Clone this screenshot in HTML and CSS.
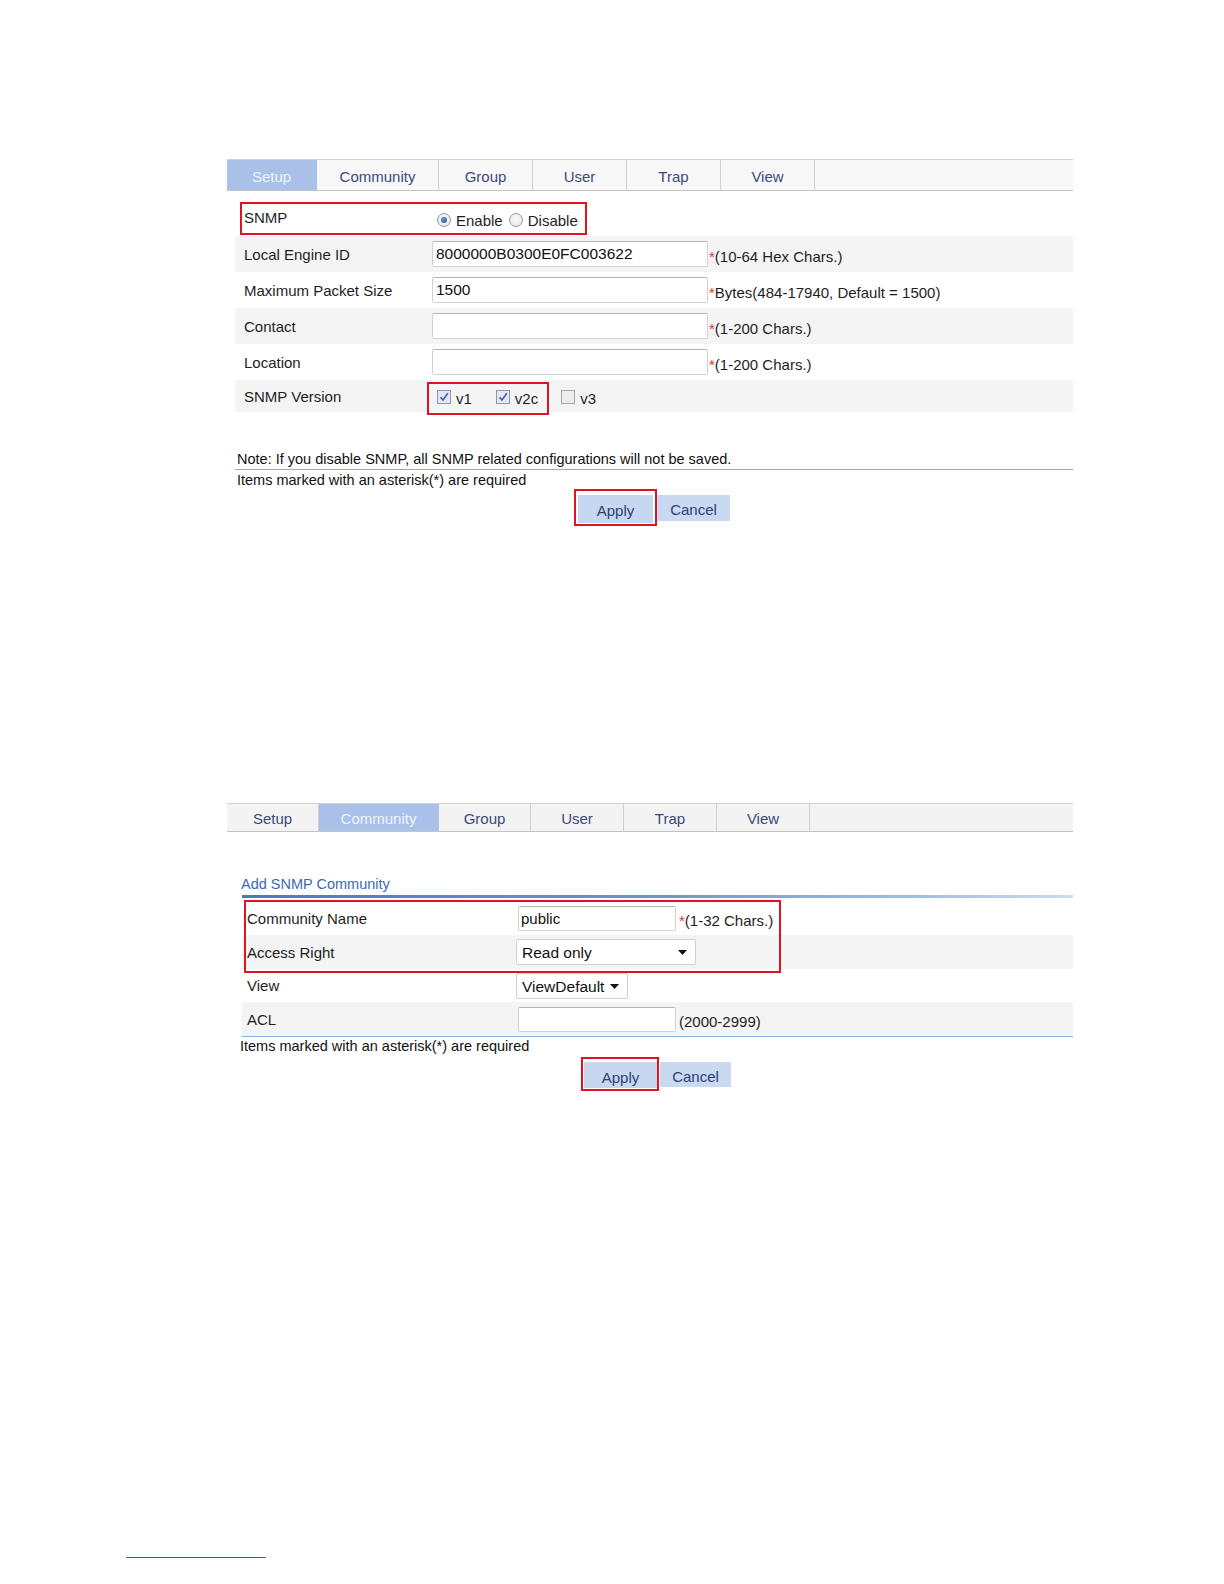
FILE: index.html
```html
<!DOCTYPE html>
<html>
<head>
<meta charset="utf-8">
<title>SNMP</title>
<link rel="stylesheet" href="styles.css">
</head>
<body>
<div class="page">

  <section class="panel panel-setup">
    <div class="tabs tabs-a">
      <div class="tab active" style="width:90px">Setup</div>
      <div class="tab" style="width:122px">Community</div>
      <div class="tab" style="width:94px">Group</div>
      <div class="tab" style="width:94px">User</div>
      <div class="tab" style="width:94px">Trap</div>
      <div class="tab" style="width:94px">View</div>
    </div>

    <div class="form form-a">
      <div class="row row-snmp">
        <div class="lbl lbl-top">SNMP</div>
        <div class="val">
          <span class="radio on"></span><span class="opt">Enable</span>
          <span class="radio"></span><span class="opt">Disable</span>
        </div>
        <div class="mark mark-snmp"></div>
      </div>
      <div class="row alt">
        <div class="lbl">Local Engine ID</div>
        <div class="val"><div class="input wide">8000000B0300E0FC003622</div><span class="hint"><i>*</i>(10-64 Hex Chars.)</span></div>
      </div>
      <div class="row">
        <div class="lbl">Maximum Packet Size</div>
        <div class="val"><div class="input wide">1500</div><span class="hint"><i>*</i>Bytes(484-17940, Default = 1500)</span></div>
      </div>
      <div class="row alt">
        <div class="lbl">Contact</div>
        <div class="val"><div class="input wide"></div><span class="hint"><i>*</i>(1-200 Chars.)</span></div>
      </div>
      <div class="row">
        <div class="lbl">Location</div>
        <div class="val"><div class="input wide"></div><span class="hint"><i>*</i>(1-200 Chars.)</span></div>
      </div>
      <div class="row alt row-ver">
        <div class="lbl">SNMP Version</div>
        <div class="val">
          <span class="cb"><svg width="14" height="14" viewBox="0 0 14 14"><rect x="0.5" y="0.5" width="13" height="13" fill="#e4e7ef" stroke="#8b98b4"/><path d="M3.5 7.2 L6 10 L10.8 3.2" fill="none" stroke="#3d5fae" stroke-width="1.6"/></svg></span><span class="cbl">v1</span>
          <span class="cb cb2"><svg width="14" height="14" viewBox="0 0 14 14"><rect x="0.5" y="0.5" width="13" height="13" fill="#e4e7ef" stroke="#8b98b4"/><path d="M3.5 7.2 L6 10 L10.8 3.2" fill="none" stroke="#3d5fae" stroke-width="1.6"/></svg></span><span class="cbl">v2c</span>
          <span class="cb cb3"><svg width="14" height="14" viewBox="0 0 14 14"><rect x="0.5" y="0.5" width="13" height="13" fill="#eeeeee" stroke="#a8a8a8"/></svg></span><span class="cbl">v3</span>
        </div>
        <div class="mark mark-ver"></div>
      </div>
    </div>

    <div class="note">Note: If you disable SNMP, all SNMP related configurations will not be saved.</div>
    <div class="req req-a">Items marked with an asterisk(*) are required</div>
    <div class="btns btns-a">
      <div class="btn apply marked">Apply</div>
      <div class="btn cancel">Cancel</div>
    </div>
  </section>

  <section class="panel panel-community">
    <div class="tabs tabs-b">
      <div class="tab" style="width:92px">Setup</div>
      <div class="tab active" style="width:120px">Community</div>
      <div class="tab" style="width:92px">Group</div>
      <div class="tab" style="width:93px">User</div>
      <div class="tab" style="width:93px">Trap</div>
      <div class="tab" style="width:93px">View</div>
    </div>

    <div class="title">Add SNMP Community</div>
    <div class="title-rule"></div>

    <div class="form form-b">
      <div class="group-marked">
        <div class="row2 h33">
          <div class="lbl2">Community Name</div>
          <div class="val"><div class="input small">public</div><span class="hint2"><i>*</i>(1-32 Chars.)</span></div>
        </div>
        <div class="row2 h34 alt">
          <div class="lbl2">Access Right</div>
          <div class="val"><div class="select sel-access"><span>Read only</span><svg width="9" height="5" viewBox="0 0 9 5"><path d="M0 0 H9 L4.5 5 Z" fill="#111"/></svg></div></div>
        </div>
      </div>
      <div class="row2 h33">
        <div class="lbl2">View</div>
        <div class="val"><div class="select sel-view"><span>ViewDefault</span><svg width="9" height="5" viewBox="0 0 9 5"><path d="M0 0 H9 L4.5 5 Z" fill="#111"/></svg></div></div>
      </div>
      <div class="row2 h34 alt">
        <div class="lbl2">ACL</div>
        <div class="val"><div class="input small"></div><span class="hint2">(2000-2999)</span></div>
      </div>
    </div>

    <div class="req req-b">Items marked with an asterisk(*) are required</div>
    <div class="btns btns-b">
      <div class="btn apply marked">Apply</div>
      <div class="btn cancel">Cancel</div>
    </div>
  </section>

  <div class="footrule"></div>
</div>
</body>
</html>
```

FILE: styles.css
```css
* { box-sizing: border-box; }

body {
  margin: 0;
  background: #ffffff;
  font-family: "Liberation Sans", Arial, sans-serif;
  font-size: 15px;
  color: #1e1e1e;
}

.page {
  padding-top: 159px;
  padding-bottom: 0;
}

.panel {
  margin-left: 227px;
  width: 846px;
}

/* ---------- tabs ---------- */
.tabs {
  display: flex;
  border-top: 1px solid #d4d4d4;
  border-bottom: 1px solid #c4c4c4;
}
.tabs-a { height: 32px; background: #f8f8f8; }
.tabs-b { height: 29px; background: #f3f3f3; }

.tab {
  display: flex;
  align-items: center;
  justify-content: center;
  border-right: 1px solid #d0d0d0;
  color: #3c4a7a;
  font-size: 15px;
  padding-top: 3px;
}
.tabs-b .tab { padding-top: 2px; }
.tab.active {
  background: #a9c1e8;
  color: #eef3fb;
  border-right-color: #a9c1e8;
}

/* ---------- form A ---------- */
.form-a {
  margin-top: 9px;
  margin-left: 8px;
  width: 838px;
}
.row {
  position: relative;
  display: flex;
  align-items: center;
  height: 36px;
}
.row.alt { background: #f4f4f4; }
.row-snmp { height: 36px; }
.row-ver { height: 32px; }

.lbl {
  width: 197px;
  padding-left: 9px;
  font-size: 15px;
  color: #1e1e1e;
}
.lbl-top { padding-bottom: 2px; }

.val {
  display: flex;
  align-items: center;
}

.input {
  background: #ffffff;
  border: 1px solid #d2d2d2;
  border-top-color: #b4b4b4;
  border-radius: 2px;
  height: 26px;
  padding: 2px 0 0 3px;
  font-size: 15.5px;
  color: #111;
  line-height: 20px;
}
.input.wide { width: 276px; }

.hint {
  margin-left: 1px;
  padding-top: 5px;
  font-size: 15px;
  color: #1e1e1e;
}
.hint i, .hint2 i {
  font-style: normal;
  color: #e0303a;
}

/* radios */
.radio {
  display: inline-block;
  width: 14px;
  height: 14px;
  border-radius: 50%;
  border: 1px solid #8e98aa;
  background: radial-gradient(circle at 50% 40%, #fbfbfb 0%, #e2e2e2 100%);
  margin-left: 5px;
  margin-top: 4px;
  position: relative;
}
.radio.on::after {
  content: "";
  position: absolute;
  left: 3px; top: 3px;
  width: 6px; height: 6px;
  border-radius: 50%;
  background: radial-gradient(circle at 40% 35%, #6c93d0 0%, #1f4a93 100%);
}
.opt {
  margin-left: 5px;
  padding-top: 4px;
  font-size: 15px;
}
.opt + .radio { margin-left: 6px; }

/* checkboxes */
.cb {
  display: inline-flex;
  margin-left: 5px;
  margin-top: 1px;
}
.cb2 { margin-left: 24px; }
.cb3 { margin-left: 23px; }
.cbl {
  margin-left: 5px;
  padding-top: 4px;
  font-size: 15px;
}

/* annotation boxes */
.mark {
  position: absolute;
  border: 2px solid #e0141e;
  pointer-events: none;
}
.mark-snmp { left: 5px; top: 2px; width: 347px; height: 33px; }
.mark-ver { left: 192px; top: 2px; width: 122px; height: 33px; }

/* note / required */
.note {
  margin-top: 38px;
  margin-left: 8px;
  width: 838px;
  height: 20px;
  padding-left: 2px;
  line-height: 18px;
  border-bottom: 1px solid #7fb0de;
  font-size: 14.5px;
  color: #111;
}
.req {
  line-height: 18px;
  font-size: 14.5px;
  color: #111;
}
.req-a { margin-top: 1px; margin-left: 10px; }

/* buttons */
.btns {
  display: flex;
  justify-content: center;
  align-items: flex-start;
}
.btns-a { margin-top: 6px; margin-left: 8px; width: 838px; gap: 4px; }
.btn {
  position: relative;
  display: flex;
  align-items: center;
  justify-content: center;
  background: #c7d7f0;
  color: #2e3f72;
  font-size: 15px;
  padding-top: 3px;
}
.btns-a .apply { width: 75px; height: 28px; }
.btns-a .cancel { width: 73px; height: 26px; background: #c9d9f1; }
.btn.marked::after {
  content: "";
  position: absolute;
  left: -4px; right: -4px; top: -6px; bottom: -3px;
  border: 2px solid #e0141e;
}

/* ---------- panel B ---------- */
.panel-community { margin-top: 280px; }

.title {
  margin-top: 43px;
  margin-left: 14px;
  height: 20px;
  line-height: 18px;
  font-size: 14.5px;
  color: #3a6bb2;
}
.title-rule {
  margin-left: 15px;
  height: 3px;
  background: linear-gradient(to right, #4c7bb4 0%, #6d96c6 50%, #a9c3e2 85%, #cddcee 100%);
}

.form-b {
  margin-top: 4px;
  margin-left: 15px;
  width: 831px;
  border-bottom: 1px solid #86b4de;
}
.group-marked { position: relative; }
.group-marked::after {
  content: "";
  position: absolute;
  left: 2px; top: -2px;
  width: 533px; height: 69px;
  border: 2px solid #e0141e;
  pointer-events: none;
}
.row2 {
  display: flex;
  align-items: center;
}
.row2.alt { background: #f4f4f4; }
.h33 { height: 33px; }
.h34 { height: 34px; }
.lbl2 {
  width: 274px;
  padding-left: 5px;
  font-size: 15px;
  color: #1e1e1e;
}
.input.small {
  width: 158px;
  height: 25px;
  margin-left: 2px;
  padding-left: 2px;
  font-size: 15px;
}
.hint2 {
  margin-left: 3px;
  padding-top: 4px;
  font-size: 15px;
}

.select {
  display: flex;
  align-items: center;
  justify-content: space-between;
  background: #ffffff;
  border: 1px solid #d0d0d0;
  border-radius: 2px;
  height: 26px;
  padding: 2px 8px 0 5px;
  font-size: 15.5px;
  color: #111;
}
.select svg { margin-top: -1px; }
.sel-access { width: 180px; }
.sel-view { width: 112px; }

.req-b { margin-left: 13px; margin-top: 0; }
.btns-b { margin-top: 7px; margin-left: 15px; width: 831px; gap: 3px; }
.btns-b .apply { width: 73px; height: 26px; padding-top: 4px; }
.btns-b .cancel { width: 71px; height: 25px; background: #c9d9f1; padding-top: 3px; }
.btns-b .btn.marked::after {
  left: -3px; right: -2px; top: -5px; bottom: -3px;
}

.footrule {
  margin-top: 469px;
  margin-left: 126px;
  width: 140px;
  height: 1px;
  background: #3a56a6;
}
```
